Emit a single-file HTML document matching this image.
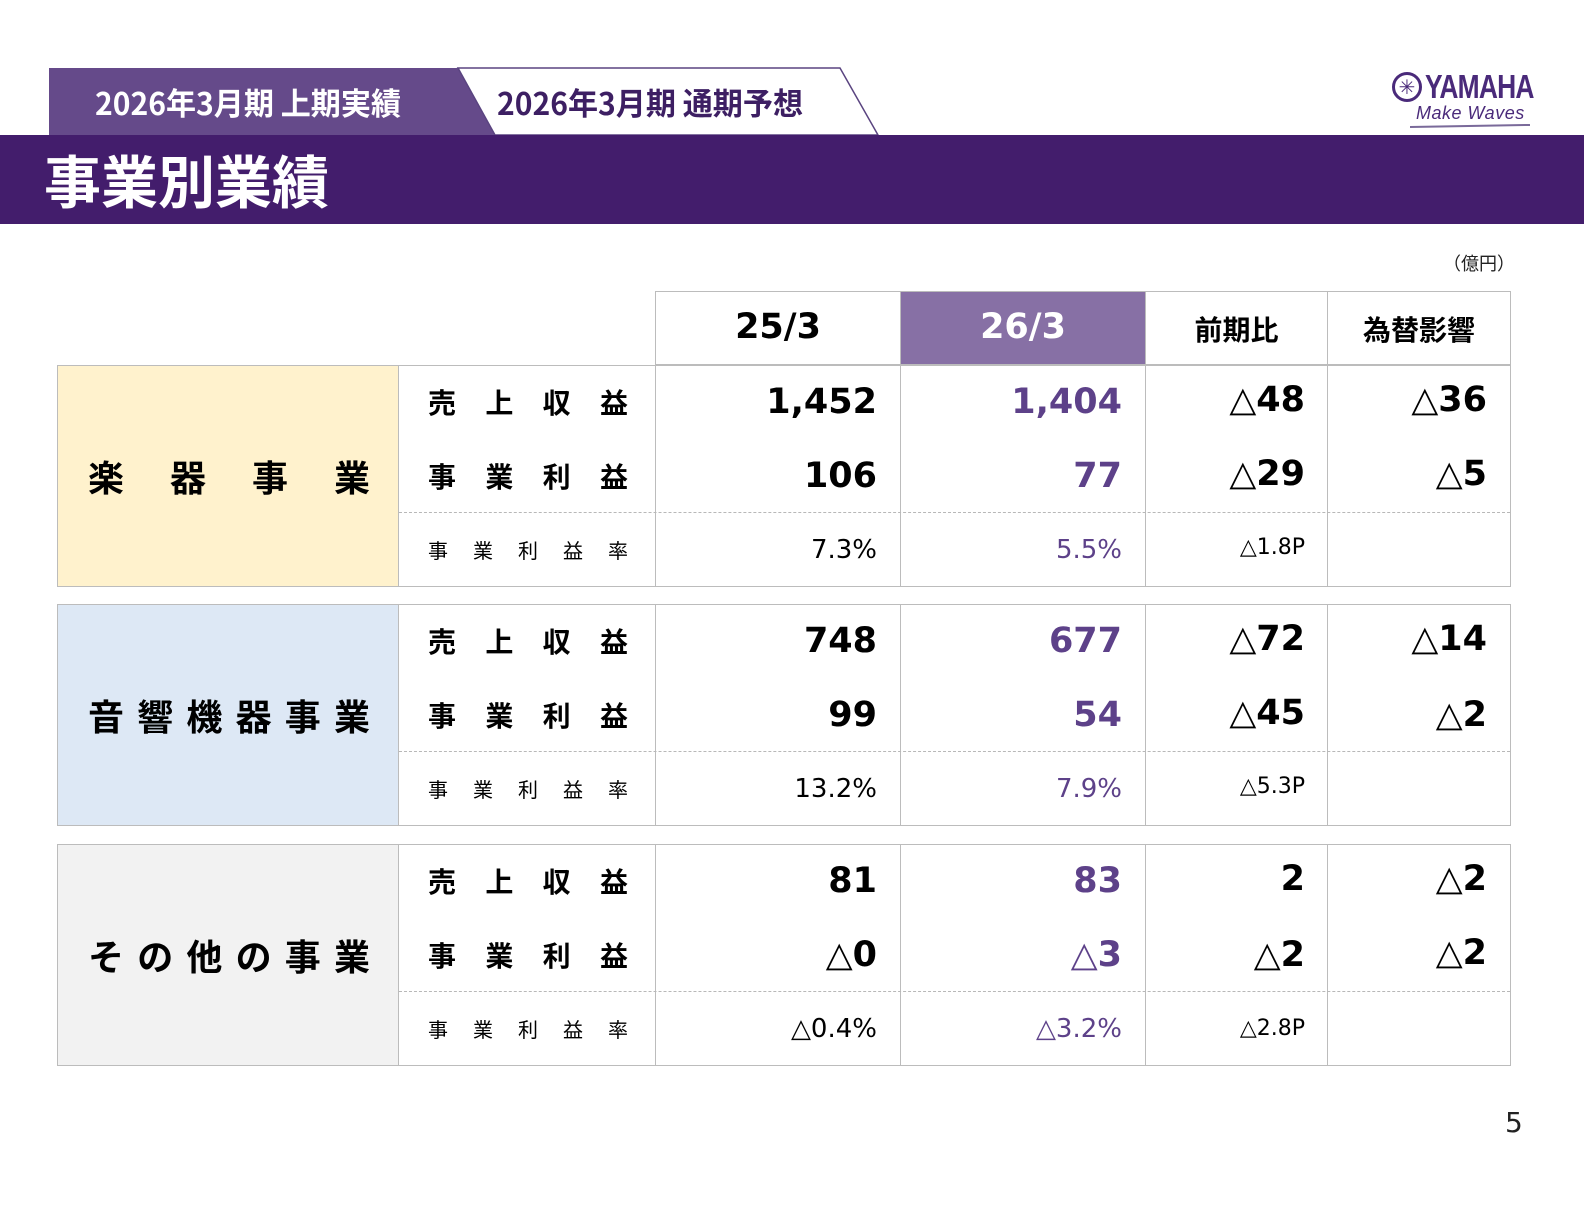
<!DOCTYPE html>
<html><head><meta charset="utf-8"><style>
*{margin:0;padding:0;box-sizing:border-box}
body{width:1584px;height:1224px;background:#fff;position:relative;overflow:hidden;font-family:"DejaVu Sans","Noto Sans CJK JP",sans-serif}
.a{position:absolute}
.jp{font-family:"Noto Sans CJK JP",sans-serif}
.cell{position:absolute;border:1.5px solid #bcbcbc}
.num{position:absolute;text-align:right;font-weight:bold;font-size:35px;line-height:74px;white-space:nowrap}
.rate{position:absolute;text-align:right;font-size:26px;line-height:74px;white-space:nowrap}
.lab{position:absolute;left:428px;width:200px;font-family:"Noto Sans CJK JP",sans-serif;font-weight:bold;font-size:28px;line-height:74px;display:flex;justify-content:space-between}
.lab2{position:absolute;left:428px;width:200px;font-family:"Noto Sans CJK JP",sans-serif;font-size:20px;line-height:74px;display:flex;justify-content:space-between}
.dash{position:absolute;left:399px;width:1111px;border-top:1.5px dashed #b8b8b8}
.p{color:#5d4189}
.big{position:absolute;left:57px;width:342px;height:222px;border:1.5px solid #bcbcbc;font-family:"Noto Sans CJK JP",sans-serif;font-weight:bold;font-size:36px;display:flex;align-items:center;justify-content:space-between;padding:0 28px 0 30px}
</style></head><body>
<svg class="a" style="left:0;top:0" width="1584" height="230">
<polygon points="49,68 458,68 495,135 49,135" fill="#654a8a"/>
<polygon points="458,68 840,68 878,135 495,135" fill="#fff" stroke="#5a4480" stroke-width="1.5"/>
<rect x="0" y="135" width="1584" height="89" fill="#431d6c"/>
</svg>
<div class="a jp" style="left:95px;top:81px;font-size:31px;font-weight:bold;color:#fff;line-height:42px;transform:scaleX(0.97);transform-origin:left">2026年3月期 上期実績</div>
<div class="a jp" style="left:497px;top:81px;font-size:31px;font-weight:bold;color:#3d1f63;line-height:42px;transform:scaleX(0.97);transform-origin:left">2026年3月期 通期予想</div>
<div class="a jp" style="left:44px;top:144px;font-size:57px;font-weight:bold;color:#fff;line-height:70px">事業別業績</div>
<div class="a" style="left:1392px;top:72px;width:30px;height:30px;border:3px solid #4a2a7a;border-radius:50%;color:#4a2a7a;font-size:20px;text-align:center;line-height:24px">✳</div>
<div class="a" style="left:1425px;top:68px;font-family:'Liberation Sans';font-weight:bold;font-size:33px;color:#4a2a7a;transform:scaleX(0.8);transform-origin:left;letter-spacing:-1px">YAMAHA</div>
<div class="a" style="left:1416px;top:103px;font-family:'Liberation Sans';font-style:italic;font-size:18px;color:#4a2a7a;letter-spacing:0.5px">Make Waves</div>
<div class="a" style="left:1410px;top:125px;width:120px;height:2px;background:#7a6a9a;transform:rotate(-1deg)"></div>
<div class="a jp" style="left:1443px;top:250px;font-size:18px;color:#222">（億円）</div>

<div class="cell" style="left:655px;top:291px;width:246px;height:74px"></div>
<div class="cell" style="left:900px;top:291px;width:246px;height:74px;background:#8770a5"></div>
<div class="cell" style="left:1145px;top:291px;width:183px;height:74px"></div>
<div class="cell" style="left:1327px;top:291px;width:184px;height:74px"></div>
<div class="a" style="left:655px;top:291px;width:246px;line-height:72px;text-align:center;font-size:35px;font-weight:bold">25/3</div>
<div class="a" style="left:900px;top:291px;width:246px;line-height:72px;text-align:center;font-size:35px;font-weight:bold;color:#fff">26/3</div>
<div class="a jp" style="left:1145px;top:291px;width:183px;line-height:76px;text-align:center;font-size:28px;font-weight:bold">前期比</div>
<div class="a jp" style="left:1327px;top:291px;width:184px;line-height:76px;text-align:center;font-size:28px;font-weight:bold">為替影響</div>

<div class="big" style="top:365px;background:#fff2cd"><span>楽</span><span>器</span><span>事</span><span>業</span></div>
<div class="cell" style="left:398px;top:365px;width:258px;height:222px"></div>
<div class="cell" style="left:655px;top:365px;width:246px;height:222px"></div>
<div class="cell" style="left:900px;top:365px;width:246px;height:222px"></div>
<div class="cell" style="left:1145px;top:365px;width:183px;height:222px"></div>
<div class="cell" style="left:1327px;top:365px;width:184px;height:222px"></div>
<div class="dash" style="top:512px"></div>
<div class="lab" style="top:365px"><span>売</span><span>上</span><span>収</span><span>益</span></div>
<div class="lab" style="top:439px"><span>事</span><span>業</span><span>利</span><span>益</span></div>
<div class="lab2" style="top:513px"><span>事</span><span>業</span><span>利</span><span>益</span><span>率</span></div>
<div class="num" style="right:707px;top:365px">1,452</div>
<div class="num" style="right:707px;top:439px">106</div>
<div class="rate" style="right:707px;top:513px">7.3%</div>
<div class="num p" style="right:462px;top:365px">1,404</div>
<div class="num p" style="right:462px;top:439px">77</div>
<div class="rate p" style="right:462px;top:513px">5.5%</div>
<div class="num" style="right:279px;top:363px">△48</div>
<div class="num" style="right:279px;top:437px">△29</div>
<div class="rate" style="right:279px;top:511px;font-size:22px">△1.8P</div>
<div class="num" style="right:97px;top:363px">△36</div>
<div class="num" style="right:97px;top:437px">△5</div>

<div class="big" style="top:604px;background:#dde8f5"><span>音</span><span>響</span><span>機</span><span>器</span><span>事</span><span>業</span></div>
<div class="cell" style="left:398px;top:604px;width:258px;height:222px"></div>
<div class="cell" style="left:655px;top:604px;width:246px;height:222px"></div>
<div class="cell" style="left:900px;top:604px;width:246px;height:222px"></div>
<div class="cell" style="left:1145px;top:604px;width:183px;height:222px"></div>
<div class="cell" style="left:1327px;top:604px;width:184px;height:222px"></div>
<div class="dash" style="top:751px"></div>
<div class="lab" style="top:604px"><span>売</span><span>上</span><span>収</span><span>益</span></div>
<div class="lab" style="top:678px"><span>事</span><span>業</span><span>利</span><span>益</span></div>
<div class="lab2" style="top:752px"><span>事</span><span>業</span><span>利</span><span>益</span><span>率</span></div>
<div class="num" style="right:707px;top:604px">748</div>
<div class="num" style="right:707px;top:678px">99</div>
<div class="rate" style="right:707px;top:752px">13.2%</div>
<div class="num p" style="right:462px;top:604px">677</div>
<div class="num p" style="right:462px;top:678px">54</div>
<div class="rate p" style="right:462px;top:752px">7.9%</div>
<div class="num" style="right:279px;top:602px">△72</div>
<div class="num" style="right:279px;top:676px">△45</div>
<div class="rate" style="right:279px;top:750px;font-size:22px">△5.3P</div>
<div class="num" style="right:97px;top:602px">△14</div>
<div class="num" style="right:97px;top:678px">△2</div>

<div class="big" style="top:844px;background:#f2f2f2"><span>そ</span><span>の</span><span>他</span><span>の</span><span>事</span><span>業</span></div>
<div class="cell" style="left:398px;top:844px;width:258px;height:222px"></div>
<div class="cell" style="left:655px;top:844px;width:246px;height:222px"></div>
<div class="cell" style="left:900px;top:844px;width:246px;height:222px"></div>
<div class="cell" style="left:1145px;top:844px;width:183px;height:222px"></div>
<div class="cell" style="left:1327px;top:844px;width:184px;height:222px"></div>
<div class="dash" style="top:991px"></div>
<div class="lab" style="top:844px"><span>売</span><span>上</span><span>収</span><span>益</span></div>
<div class="lab" style="top:918px"><span>事</span><span>業</span><span>利</span><span>益</span></div>
<div class="lab2" style="top:992px"><span>事</span><span>業</span><span>利</span><span>益</span><span>率</span></div>
<div class="num" style="right:707px;top:844px">81</div>
<div class="num" style="right:707px;top:918px">△0</div>
<div class="rate" style="right:707px;top:992px">△0.4%</div>
<div class="num p" style="right:462px;top:844px">83</div>
<div class="num p" style="right:462px;top:918px">△3</div>
<div class="rate p" style="right:462px;top:992px">△3.2%</div>
<div class="num" style="right:279px;top:842px">2</div>
<div class="num" style="right:279px;top:918px">△2</div>
<div class="rate" style="right:279px;top:992px;font-size:22px">△2.8P</div>
<div class="num" style="right:97px;top:842px">△2</div>
<div class="num" style="right:97px;top:916px">△2</div>

<div class="a" style="left:1505px;top:1106px;font-size:28px;color:#222">5</div>
</body></html>
